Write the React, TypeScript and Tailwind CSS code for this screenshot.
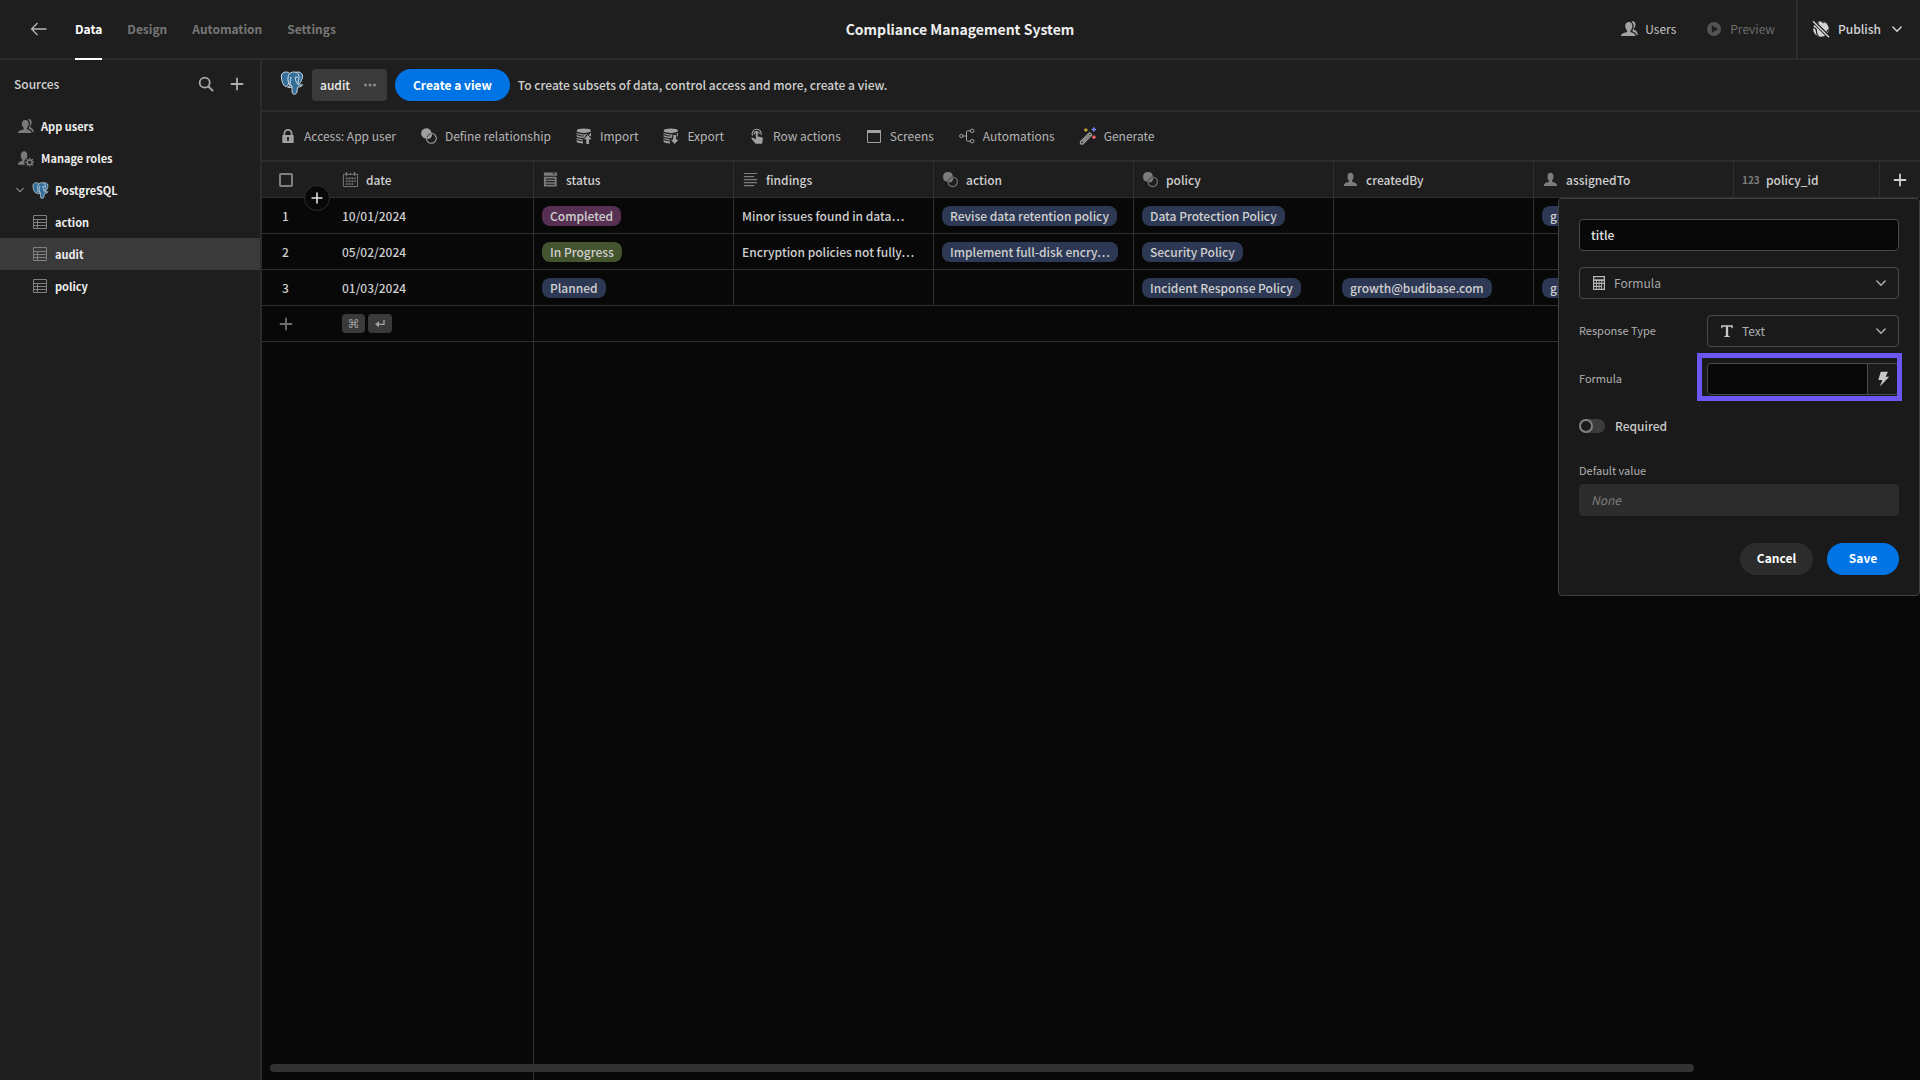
import { useState, type ReactNode } from "react";

type IconProps = { className?: string };

/* ---------- icons ---------- */

function Svg({ className = "size-[18px]", children, box = "0 0 18 18" }: { className?: string; children: ReactNode; box?: string }) {
  return (
    <svg viewBox={box} className={`shrink-0 ${className}`} fill="currentColor" aria-hidden="true">
      {children}
    </svg>
  );
}

const line = { fill: "none", stroke: "currentColor" } as const;

const BackIcon = ({ className }: IconProps) => (
  <Svg className={className}>
    <path {...line} strokeWidth="1.3" d="M16.500 9H2M7.500 3 1.600 9l5.900 6" />
  </Svg>
);

const UsersIcon = ({ className }: IconProps) => (
  <Svg className={className}>
    <path d="M11 12.3c-.5-.2-.7-.6-.6-1.2.1-.5.4-.8.8-1.3.8-1 1.2-2.2 1.2-3.7C12.400 3.500 11 2 8.800 2S5.200 3.500 5.200 6.100c0 1.500.4 2.700 1.200 3.700.4.5.7.8.8 1.300.1.6-.1 1-.6 1.200C3.500 13 1 13.900 1 15.500V16h14.500c0-2-2-3-4.500-3.700z" />
    <path d="M12.200 1.200c2.200-.3 3.300 1.300 3.300 3.600 0 1.500-.5 2.400-1.200 3.200-.6.7-.8 1.400 0 1.800 1.900.9 3.500 2 3.500 5.200l-1.200.2c-.3-1.900-1.400-2.800-3.400-3.500l-1-.6c.1-.7 1.500-2 1.500-4.900 0-1.800-.500-3.200-1.900-4.300z" />
  </Svg>
);

const UserIcon = ({ className }: IconProps) => (
  <Svg className={className}>
    <path d="M11.200 11.700c-.7-.3-.8-.9-.5-1.500.9-1 1.500-2.300 1.500-4 0-2.700-1.200-4.300-3.200-4.300S5.800 3.500 5.800 6.200c0 1.700.6 3 1.500 4 .3.600.2 1.200-.5 1.500-2.900.8-4.800 1.700-4.800 3.900v.4h14v-.4c0-2.200-1.900-3.100-4.800-3.900z" />
  </Svg>
);

const UserGearIcon = ({ className }: IconProps) => (
  <Svg className={className}>
    <path d="M8.600 15.700H1c0-2.700 1.600-3.300 4-4.100.8-.3.900-.9.500-1.500C4.600 9.100 4 7.800 4 5.600 4 3 5.300 1.200 7.500 1.200S11 3 11 5.600c0 1.200-.2 2.100-.5 2.900-1.600 1-2.800 2.600-2.800 4.300 0 1.100.3 2 .9 2.900z" />
    <circle cx="13.500" cy="13" r="2.500" {...line} strokeWidth="1.500" />
    <path {...line} strokeWidth="1.500" d="M13.500 8.400v2M13.500 15.600v2M8.900 13h2M16.100 13h2M10.200 9.700l1.500 1.500M15.300 14.800l1.500 1.500M16.800 9.700l-1.500 1.500M11.700 14.800l-1.500 1.500" />
  </Svg>
);

const PlayIcon = ({ className }: IconProps) => (
  <Svg className={className}>
    <path fillRule="evenodd" d="M9 2a7 7 0 1 0 0 14A7 7 0 0 0 9 2zM6.800 5.300 13 9l-6.200 3.700z" />
  </Svg>
);

const GlobeStrikeIcon = ({ className }: IconProps) => (
  <Svg className={className}>
    <circle cx="9" cy="9" r="7.800" />
    <path className="stroke-[#1e1e1e]" fill="none" strokeWidth="1.200" d="M5.500 0c-.5 1.600.8 2.200.6 3.600M1 7.500c2.300.4 3.600 1.800 3.400 3.600-.1 1.700.5 3.400 2 5M9.500 0c-.2 1.700 1 2.400 2.800 2.900M15 12.500c-.2-1.600.5-2.600 2.500-3" />
    <path className="stroke-[#1e1e1e]" fill="none" strokeWidth="3.600" d="M.6.6l16.800 16.800" />
    <path {...line} strokeWidth="1.400" d="M1 1.300l16 16" />
  </Svg>
);

const ChevronIcon = ({ className }: IconProps) => (
  <Svg className={className} box="0 0 10 10">
    <path {...line} strokeWidth="1.500" strokeLinecap="round" d="M.9 3 5 7.200 9.100 3" />
  </Svg>
);

const SearchIcon = ({ className }: IconProps) => (
  <Svg className={className}>
    <circle cx="7.700" cy="7.700" r="5" {...line} strokeWidth="1.800" />
    <path {...line} strokeWidth="2" strokeLinecap="round" d="M11.600 11.600l4 4" />
  </Svg>
);

const PlusIcon = ({ className }: IconProps) => (
  <Svg className={className}>
    <path {...line} strokeWidth="1.800" strokeLinecap="round" d="M9 3.500v11M3.500 9h11" />
  </Svg>
);

const TableIcon = ({ className }: IconProps) => (
  <Svg className={className}>
    <path {...line} strokeWidth="1" d="M2.500 2.500h13v13h-13zM2.500 6.500h13M2.500 9.500h13M2.500 12.500h13M6.500 6.500v9" />
  </Svg>
);

const PostgresLogo = ({ className }: IconProps) => (
  <Svg className={className} box="0 0 24 25">
    <g fill="#336f98" stroke="#d6e2ea" strokeWidth="1" strokeLinejoin="round">
      <path d="M8.600 1.700C5.400.3 1 1 .9 5.800c-.1 3.700 2.200 9.900 4.200 10.400 1.300.3 2.200-1.400 3.200-2.500l3-9.500z" />
      <path d="M15.800 1.500C19.400.2 22.800 2 23 5c.2 2.700-1.900 7-3.800 9.300l-3 .4-2.600-8z" />
      <path d="M8.300 4.600c1-2.600 3.600-3.700 6-3.600 3.300.1 5.200 2.600 5.100 5.400-.1 2.600-1.300 4.500-1.100 7.400.4 1.200 2.600.8 4.700.5-.6 1.600-2.700 2.500-4.900 2.400l-.5.500c-.2 2-.1 4.500-1 5.900-.8 1.200-3.100 1.500-3.900.3-.9-1.300-.6-4.200-.8-6.800-1.300.9-3.200.8-4.600.1.700-.8 2.200-.5 2.800-1.500C8.200 13.300 7 8.100 8.300 4.600z" />
      <path fill="none" d="M11.900 16.600c.1-1.900-1.900-2.100-1.900-4 0-1.500.6-2.600.4-4.700M17.900 13.700c-1.500-2.300-3.200-5-2.100-7.800" />
    </g>
    <circle cx="10.900" cy="7" r=".8" fill="#fff" />
    <circle cx="17.200" cy="6.600" r=".8" fill="#fff" />
  </Svg>
);

const LockIcon = ({ className }: IconProps) => (
  <Svg className={className}>
    <path fillRule="evenodd" d="M14.200 8H13.500V6.500a4.500 4.500 0 0 0-9 0V8h-.700a.5.500 0 0 0-.5.500v7a.5.500 0 0 0 .5.500h10.400a.5.500 0 0 0 .5-.5v-7a.5.500 0 0 0-.5-.5zM6.200 6.500a2.800 2.800 0 0 1 5.600 0V8H6.200zM9.800 12.300V14H8.200v-1.700a1.300 1.300 0 1 1 1.600 0z" />
  </Svg>
);

const VennIcon = ({ className }: IconProps) => (
  <Svg className={className}>
    <path d="M11.900 6.200A5.200 5.200 0 1 0 6.200 11.900a6 6 0 0 1 5.700-5.700z" transform="translate(-.4 -.4)" />
    <path d="M12.200 7.100A5 5 0 0 1 7.100 12.200 5 5 0 0 1 12.200 7.100z" />
    <circle cx="11.300" cy="11.300" r="5" {...line} strokeWidth="1.100" />
  </Svg>
);

const Stack = () => (
  <>
    <ellipse cx="8.800" cy="3.700" rx="7.200" ry="2.300" />
    <path d="M1.600 5.800c1.800 1.300 4.500 1.600 7.200 1.600s5.400-.3 7.200-1.600v3.700l-5.300 1.300c-4 .4-7.500-.2-9.100-1.200z" />
    <path d="M1.600 10.700c2 .9 3.800 1.200 6.400 1.200v4.600c-3-.1-5.500-.6-6.400-1.700z" />
    <path className="stroke-[#1e1e1e]" fill="none" strokeWidth="1.100" d="M1.500 7.200c1.800 1.800 5 1.900 7.300 1.700M1.500 12.300c2 1.500 4 1.700 6.500 1.700M10 9.500l5-3" />
  </>
);

const ImportIcon = ({ className }: IconProps) => (
  <Svg className={className}>
    <Stack />
    <path className="stroke-[#1e1e1e]" strokeWidth="1" d="M12.700 7.500 7.800 12.800h3V17.500h3.800v-4.700h3z" />
  </Svg>
);

const ExportIcon = ({ className }: IconProps) => (
  <Svg className={className}>
    <Stack />
    <path className="stroke-[#1e1e1e]" strokeWidth="1" d="M12.700 17.500 7.800 12.200h3V7.500h3.800v4.700h3z" />
  </Svg>
);

const TapIcon = ({ className }: IconProps) => (
  <Svg className={className}>
    <path {...line} strokeWidth="1.100" d="M4.600 8.600A4.500 4.500 0 1 1 13 8M6.200 7.500a2.600 2.600 0 1 1 5.200-.6" />
    <path d="M7.800 5.400c0-1.300 2-1.300 2 0v4.200l3.900.7c1 .2 1.300.8 1.200 1.700l-.9 4.800H7.600L3.700 12c-.8-1 .4-1.900 1.300-1.200l2.800 1.600z" />
  </Svg>
);

const ScreenIcon = ({ className }: IconProps) => (
  <Svg className={className}>
    <path {...line} strokeWidth="1" d="M2.500 3.500h13v12h-13z" />
    <path d="M2 3h14v3H2z" />
  </Svg>
);

const BranchIcon = ({ className }: IconProps) => (
  <Svg className={className}>
    <g {...line} strokeWidth="1">
      <circle cx="3.300" cy="9" r="1.700" />
      <circle cx="14.200" cy="3.800" r="1.800" />
      <circle cx="14.200" cy="14.200" r="1.800" />
      <path d="M5 9h3.500M12.400 3.800H9.500a1 1 0 0 0-1 1v8.400a1 1 0 0 0 1 1h2.900" />
    </g>
  </Svg>
);

const WandIcon = ({ className }: IconProps) => (
  <Svg className={className}>
    <path {...line} strokeWidth="1.300" strokeLinejoin="round" d="M1.500 14.700 10.600 5.600 12.900 7.900 3.800 17 1.500 16.900zM9 7.200l2.300 2.300M3.500 15l6-6" />
    <path fill="none" className="stroke-amber-300/80" strokeWidth="1.300" d="M6.800 1.200v3.600M5 3h3.600" />
    <path fill="none" className="stroke-indigo-400" strokeWidth="1.300" d="M14.800.300v4.400M12.600 2.500H17" />
    <path fill="none" className="stroke-red-400" strokeWidth="1.500" d="M15 8.500v3.600M13.200 10.300h3.600" />
  </Svg>
);

const CalendarIcon = ({ className }: IconProps) => (
  <Svg className={className}>
    <path {...line} strokeWidth="1" d="M1.500 3.500h15v13h-15z" />
    <path d="M4 1h1.500v4H4zM12.500 1H14v4h-1.500zM8.200 2h1.500v2H8.200zM4 7h2v1.700H4zM7 7h2v1.700H7zM10 7h2v1.700h-2zM13 7h1.600v1.700H13zM4 10h2v1.700H4zM7 10h2v1.700H7zM10 10h2v1.700h-2zM13 10h1.600v1.700H13zM4 13h2v1.500H4zM7 13h2v1.500H7zM10 13h2v1.500h-2z" />
  </Svg>
);

const OptionsIcon = ({ className }: IconProps) => (
  <Svg className={className}>
    <path fillRule="evenodd" d="M2 1.500h14V5H2zM11 2.500l1.500 1.500L14 2.500zM2 6h13.500v10.500H2zM4 8v1.200h9.500V8zM4 10.700v1.200h9.500v-1.200zM4 13.400v1.200h9.500v-1.200z" />
  </Svg>
);

const LinesIcon = ({ className }: IconProps) => (
  <Svg className={className}>
    <path d="M2 2h14v1.300H2zM2 5.200h11v1.300H2zM2 8.400h14v1.300H2zM2 11.600h14v1.300H2zM2 14.800h11v1.300H2z" />
  </Svg>
);

const NumberIcon = () => (
  <span className="w-[17px] shrink-0 text-[10px] leading-4 font-bold text-[#7c7c7c]" aria-hidden="true">123</span>
);

const CalculatorIcon = ({ className }: IconProps) => (
  <Svg className={className}>
    <path fillRule="evenodd" d="M3 2h12v14H3zM4.200 3.200v2h9.600v-2zM4.200 7v1.800h1.900V7zM7 7v1.800h1.700V7zM9.500 7v1.800h1.700V7zM12.100 7v1.800h1.700V7zM4.200 9.900v1.800h1.900V9.900zM7 9.900v1.800h1.700V9.900zM9.500 9.900v1.800h1.700V9.900zM12.100 9.900v4.900h1.700V9.900zM4.200 12.900v1.800h1.900v-1.800zM7 12.900v1.800h1.700v-1.800zM9.500 12.900v1.800h1.700v-1.800z" />
  </Svg>
);

const TextTypeIcon = ({ className }: IconProps) => (
  <Svg className={className}>
    <path d="M2.500 2.500h13V6h-1.200c-.2-1.300-.6-1.800-2-1.800h-2v9.200c0 1 .5 1.200 1.700 1.300v1H6v-1c1.200-.1 1.700-.3 1.700-1.300V4.200h-2c-1.400 0-1.800.5-2 1.800H2.500z" />
  </Svg>
);

const BoltIcon = ({ className }: IconProps) => (
  <Svg className={className}>
    <path d="M6.500.800h8L12 6.500h4L5.500 17.500 8.300 10H3.700z" />
  </Svg>
);

const ReturnIcon = ({ className }: IconProps) => (
  <Svg className={className}>
    <path {...line} strokeWidth="2" d="M15 3v6.500H4.500" />
    <path d="M7.500 5v9L1.500 9.500z" />
  </Svg>
);

/* ---------- data ---------- */

const tabs = ["Data", "Design", "Automation", "Settings"];

const actions = [
  { label: "Access: App user", Icon: LockIcon },
  { label: "Define relationship", Icon: VennIcon },
  { label: "Import", Icon: ImportIcon },
  { label: "Export", Icon: ExportIcon },
  { label: "Row actions", Icon: TapIcon },
  { label: "Screens", Icon: ScreenIcon },
  { label: "Automations", Icon: BranchIcon },
  { label: "Generate", Icon: WandIcon },
];

const columns = [
  { name: "date", Icon: CalendarIcon, width: "w-[200px]" },
  { name: "status", Icon: OptionsIcon, width: "w-[200px]" },
  { name: "findings", Icon: LinesIcon, width: "w-[200px]" },
  { name: "action", Icon: VennIcon, width: "w-[200px]" },
  { name: "policy", Icon: VennIcon, width: "w-[200px]" },
  { name: "createdBy", Icon: UserIcon, width: "w-[200px]" },
  { name: "assignedTo", Icon: UserIcon, width: "w-[200px]" },
  { name: "policy_id", Icon: NumberIcon, width: "w-auto" },
];

const statusColors: Record<string, string> = {
  Completed: "bg-[#572f53]",
  "In Progress": "bg-[#43542e]",
  Planned: "bg-[#2d3954]",
};

const rows = [
  { date: "10/01/2024", status: "Completed", findings: "Minor issues found in data…", action: "Revise data retention policy", policy: "Data Protection Policy", createdBy: "", assignedTo: "growth@budibase.com" },
  { date: "05/02/2024", status: "In Progress", findings: "Encryption policies not fully…", action: "Implement full-disk encry…", policy: "Security Policy", createdBy: "", assignedTo: "" },
  { date: "01/03/2024", status: "Planned", findings: "", action: "", policy: "Incident Response Policy", createdBy: "growth@budibase.com", assignedTo: "growth@budibase.com" },
];

/* ---------- parts ---------- */

function Pill({ text, color = "bg-[#2d3954]" }: { text: string; color?: string }) {
  if (!text) return null;
  return <span className={`block w-fit max-w-full truncate rounded-lg px-2 leading-5 ${color}`}>{text}</span>;
}

function Header() {
  return (
    <header className="grid h-[60px] shrink-0 grid-cols-[1fr_auto_1fr] border-b-2 border-[#2c2c2c]">
      <div className="flex items-stretch pl-[30px]">
        <button aria-label="Back" className="mr-[27px] text-[#b8b8b8]"><BackIcon /></button>
        <nav className="-mb-0.5 flex gap-[25px]">
          {tabs.map((t, i) => (
            <a key={t} href="#" className={i === 0 ? "flex items-center border-b-2 border-white font-bold text-white" : "flex items-center border-b-2 border-transparent font-bold text-[#767676]"}>
              {t}
            </a>
          ))}
        </nav>
      </div>
      <h1 className="self-center text-[14px] leading-6 font-bold text-[#eeeeee]">Compliance Management System</h1>
      <div className="flex items-center justify-end text-[#c4c4c4]">
        <button className="mr-[29px] flex items-center gap-[7px]"><UsersIcon className="size-[18px] text-[#a3a3a3]" />Users</button>
        <button disabled className="mr-[21px] flex items-center gap-[7px] text-[#6c6c6c]"><PlayIcon className="size-[18px] text-[#535353]" />Preview</button>
        <button className="flex h-full items-center gap-2 border-l-2 border-[#2c2c2c] pr-[18px] pl-[14px] font-medium text-[#d4d4d4]">
          <GlobeStrikeIcon />Publish<ChevronIcon className="ml-[3px] size-[10px]" />
        </button>
      </div>
    </header>
  );
}

function Sidebar() {
  return (
    <aside className="flex w-[262px] shrink-0 flex-col border-r-2 border-[#2c2c2c]">
      <div className="flex h-12 items-center px-[14px]">
        <h2 className="flex-1 font-medium text-[#d0d0d0]">Sources</h2>
        <button aria-label="Search" className="mr-[13px] text-[#a8a8a8]"><SearchIcon /></button>
        <button aria-label="Add source" className="text-[#b0b0b0]"><PlusIcon /></button>
      </div>
      <nav className="mt-0.5 flex flex-col text-[11px] font-bold text-[#eeeeee]">
        <a href="#" className="flex h-8 items-center gap-[7px] pl-[17px]"><UsersIcon className="size-[17px] text-[#7a7a7a]" />App users</a>
        <a href="#" className="flex h-8 items-center gap-[7px] pl-[17px]"><UserGearIcon className="size-[17px] text-[#7a7a7a]" />Manage roles</a>
        <a href="#" className="flex h-8 items-center pl-[16px]">
          <ChevronIcon className="mr-[8px] size-2 text-[#8a8a8a]" /><PostgresLogo className="mr-[6px] size-[17px]" />PostgreSQL
        </a>
        {["action", "audit", "policy"].map((t) => (
          <a key={t} href="#" className={t === "audit" ? "flex h-8 items-center gap-[6px] bg-[#3a3a3a] pl-[31px]" : "flex h-8 items-center gap-[6px] pl-[31px]"}>
            <TableIcon className="size-[18px] text-[#808080]" />{t}
          </a>
        ))}
      </nav>
    </aside>
  );
}

function Grid() {
  return (
    <table className="w-full table-fixed border-separate border-spacing-0 text-left font-medium text-[#cfcfcf]">
      <thead className="bg-[#1e1e1e]">
        <tr className="h-9">
          <th className="w-[72px] border-b border-[#2f2f2f] p-0">
            <input type="checkbox" aria-label="Select all rows" className="ml-[17px] block size-[14px] appearance-none rounded-[2px] border-2 border-[#808080]" />
          </th>
          {columns.map(({ name, Icon, width }) => (
            <th key={name} className={`border-r border-b border-[#2f2f2f] px-2 py-0 font-medium ${width}`}>
              <span className="flex items-center gap-[7px]"><Icon className="size-[17px] shrink-0 text-[#7c7c7c]" />{name}</span>
            </th>
          ))}
          <th className="w-10 border-b border-[#2f2f2f] p-0">
            <button aria-label="Add column" className="flex w-full justify-center"><PlusIcon /></button>
          </th>
        </tr>
      </thead>
      <tbody>
        {rows.map((r, i) => (
          <tr key={r.date} className="h-9">
            <td className="border-b border-[#2f2f2f] py-0 pr-[25px] pl-0 text-center">{i + 1}</td>
            <td className="border-r border-b border-[#2f2f2f] px-2 py-0">{r.date}</td>
            <td className="border-r border-b border-[#2f2f2f] px-2 py-0"><Pill text={r.status} color={statusColors[r.status]} /></td>
            <td className="truncate border-r border-b border-[#2f2f2f] px-2 py-0">{r.findings}</td>
            <td className="border-r border-b border-[#2f2f2f] px-2 py-0"><Pill text={r.action} /></td>
            <td className="border-r border-b border-[#2f2f2f] px-2 py-0"><Pill text={r.policy} /></td>
            <td className="border-r border-b border-[#2f2f2f] px-2 py-0"><Pill text={r.createdBy} /></td>
            <td className="border-r border-b border-[#2f2f2f] px-2 py-0"><Pill text={r.assignedTo} /></td>
            <td className="border-r border-b border-[#2f2f2f] px-2 py-0" />
            <td className="border-b border-[#2f2f2f] p-0" />
          </tr>
        ))}
        <tr className="h-9">
          <td className="border-b border-[#2f2f2f] p-0">
            <button aria-label="Add row" className="ml-[15px] block text-[#707070]"><PlusIcon /></button>
          </td>
          <td className="border-r border-b border-[#2f2f2f] px-2 py-0">
            <span className="flex gap-[3px] text-[#a0a0a0]">
              <kbd className="flex h-[19px] w-[23px] items-center justify-center rounded bg-[#3a3a3a] font-['DejaVu_Sans'] text-[12px]">⌘</kbd>
              <kbd className="flex h-[19px] w-6 items-center justify-center rounded bg-[#3a3a3a]"><ReturnIcon className="size-[12px]" /></kbd>
            </span>
          </td>
          <td colSpan={8} className="border-b border-[#2f2f2f] p-0" />
        </tr>
      </tbody>
    </table>
  );
}

function ColumnPanel() {
  const [name, setName] = useState("title");
  return (
    <form className="absolute top-9 right-0 w-[362px] rounded border border-[#404040] bg-[#1a1a1a] p-5 text-[#c8c8c8]" onSubmit={(e) => e.preventDefault()}>
      <div className="flex flex-col gap-4">
        <input aria-label="Column name" value={name} onChange={(e) => setName(e.target.value)} className="h-8 w-full rounded border border-[#4a4a4a] bg-[#080808] px-[11px] pb-0.5 font-medium text-[#e0e0e0]" />
        <div className="grid grid-cols-1 items-center">
          <select aria-label="Type" className="col-start-1 row-start-1 h-8 w-full appearance-none rounded border border-[#4a4a4a] bg-transparent pl-[34px] text-[#a8a8a8]">
            <option>Formula</option>
          </select>
          <CalculatorIcon className="pointer-events-none col-start-1 row-start-1 ml-[11px] size-[18px] text-[#b8b8b8]" />
          <ChevronIcon className="pointer-events-none col-start-1 row-start-1 mr-[13px] size-[10px] justify-self-end text-[#b0b0b0]" />
        </div>
        <div className="flex items-center">
          <label htmlFor="response" className="flex-1 pb-0.5 text-[11px] text-[#b0b0b0]">Response Type</label>
          <div className="grid w-48 grid-cols-1 items-center">
            <select id="response" className="col-start-1 row-start-1 h-8 w-full appearance-none rounded border border-[#4a4a4a] bg-transparent pl-[34px] text-[#b0b0b0]">
              <option>Text</option>
            </select>
            <TextTypeIcon className="pointer-events-none col-start-1 row-start-1 ml-[12px] size-[16px] text-[#c8c8c8]" />
            <ChevronIcon className="pointer-events-none col-start-1 row-start-1 mr-[13px] size-[10px] justify-self-end text-[#b0b0b0]" />
          </div>
        </div>
        <div className="flex items-center">
          <label htmlFor="formula" className="flex-1 pb-0.5 text-[11px] text-[#b0b0b0]">Formula</label>
          <div className="relative flex h-8 w-48 rounded border border-[#4a4a4a]">
            <input id="formula" className="min-w-0 flex-1 rounded-l bg-[#080808] px-3" />
            <button type="button" aria-label="Open bindings" className="flex w-[31px] items-center justify-center border-l border-[#4a4a4a] text-[#c8c8c8]"><BoltIcon className="size-[16px]" /></button>
            <span className="pointer-events-none absolute -top-[11px] -right-1 -bottom-[7px] -left-[11px] border-[5px] border-[#6c57f3]" />
          </div>
        </div>
        <label className="flex h-8 items-center gap-[10px] pb-0.5 font-medium">
          <input type="checkbox" role="switch" className="peer sr-only" />
          <span className="flex h-[14px] w-[26px] rounded-full bg-[#3c3c3c]"><span className="size-[14px] rounded-full border-2 border-[#808080] bg-[#1a1a1a]" /></span>
          Required
        </label>
      </div>
      <label htmlFor="default" className="mt-[17px] block text-[11px] leading-5 text-[#b0b0b0]">Default value</label>
      <input id="default" disabled placeholder="None" className="mt-[4px] block h-8 w-full rounded bg-[#2c2c2c] px-3 pb-0.5 placeholder:text-[#7c7c7c] placeholder:italic" />
      <div className="mt-[27px] flex justify-end gap-[14px] font-bold text-white">
        <button type="button" className="h-8 w-[73px] rounded-full bg-[#2c2c2c] pb-0.5">Cancel</button>
        <button className="h-8 w-[72px] rounded-full bg-[#0074e4] pb-0.5">Save</button>
      </div>
    </form>
  );
}

export default function App() {
  return (
    <div className="flex h-screen flex-col overflow-hidden bg-[#1e1e1e] font-['Noto_Sans_CJK_SC',sans-serif] text-[12px] leading-5">
      <Header />
      <div className="flex min-h-0 flex-1">
        <Sidebar />
        <main className="flex min-w-0 flex-1 flex-col">
          <div className="flex h-[52px] shrink-0 items-center gap-2 border-b-2 border-[#2c2c2c] pl-[18px]">
            <PostgresLogo className="mb-1 size-6" />
            <button className="flex h-8 w-[75px] items-center justify-between rounded bg-[#3a3a3a] px-2 font-medium text-[#eeeeee]">
              audit
              <Svg className="size-[18px] text-[#888888]"><circle cx="4.500" cy="9" r="1.600" /><circle cx="9" cy="9" r="1.600" /><circle cx="13.500" cy="9" r="1.600" /></Svg>
            </button>
            <button className="h-8 rounded-full bg-[#0074e4] px-[18px] font-bold text-white">Create a view</button>
            <p className="font-medium text-[#d0d0d0]">To create subsets of data, control access and more, create a view.</p>
          </div>
          <div className="flex h-[50px] shrink-0 items-center gap-6 border-b-2 border-[#2c2c2c] pl-[17px] text-[#b4b4b4]">
            {actions.map(({ label, Icon }) => (
              <button key={label} className="flex items-center gap-[7px]"><Icon className="size-[18px] text-[#a0a0a0]" />{label}</button>
            ))}
          </div>
          <div className="relative flex min-h-0 flex-1 flex-col bg-[#080808]">
            <Grid />
            <div className="w-[272px] flex-1 border-r border-[#2f2f2f]" />
            <button aria-label="Insert row" className="absolute top-[23px] left-[42px] flex size-[26px] items-center justify-center rounded-full border border-[#2f2f2f] bg-[#080808] text-[#e0e0e0]"><PlusIcon className="size-4" /></button>
            <div className="absolute right-[226px] bottom-2 left-2 h-2 rounded-full bg-[#323232]" />
            <ColumnPanel />
          </div>
        </main>
      </div>
    </div>
  );
}
